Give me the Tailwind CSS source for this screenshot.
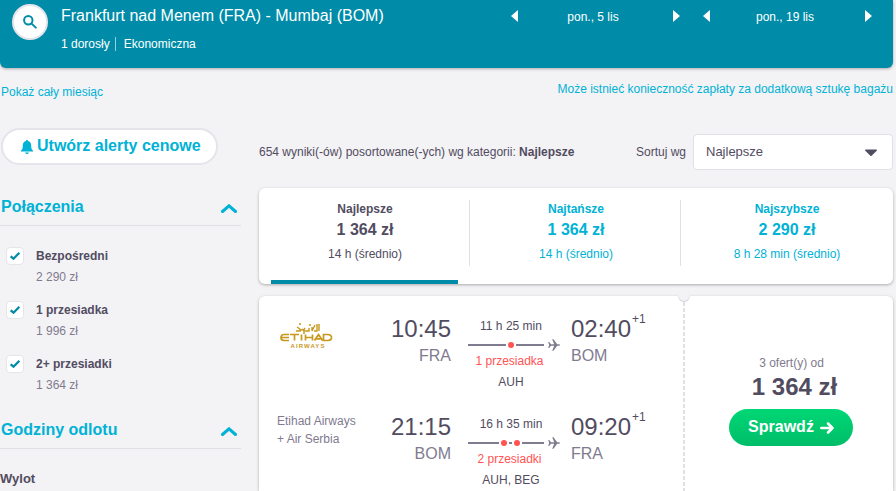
<!DOCTYPE html>
<html lang="pl">
<head>
    <meta charset="UTF-8">
    <meta name="viewport" content="width=device-width, initial-scale=1.0">
    <title>Frankfurt nad Menem (FRA) - Mumbaj (BOM)</title>
    <script src="https://cdn.jsdelivr.net/npm/@tailwindcss/browser@4"></script>
</head>
<body class="h-[491px] overflow-hidden bg-[#f3f2f5] font-['Liberation_Sans',Arial,sans-serif] text-xs text-[#524c61]">
    <!-- Search summary -->
    <header class="flex h-[68px] w-[893px] rounded-b-md bg-[#008ca8] pl-3 text-white shadow-[0_1px_3px_rgba(0,0,0,0.3)]">
        <button class="mt-1 flex size-9 items-center justify-center rounded-full border-2 border-[#e6e4eb] bg-white">
            <svg class="size-[14px]" viewBox="0 0 14 14" fill="none" stroke="#008ca8" stroke-width="2" stroke-linecap="round"><circle cx="5.3" cy="5.3" r="4.2"/><path d="M8.6 8.6 12.8 12.6"/></svg>
        </button>
        <div class="ml-[13px] w-[450px] pt-1">
            <h1 class="text-base">Frankfurt nad Menem (FRA) - Mumbaj (BOM)</h1>
            <div class="mt-2 flex h-4 items-center whitespace-nowrap">
                <span class="border-r border-white/60 pr-[5px] leading-[14px]">1 dorosły</span>
                <span class="pl-2">Ekonomiczna</span>
            </div>
        </div>
        <div class="mt-2 flex h-4 w-[169px] items-center justify-between">
            <svg class="h-3 w-[7px]" viewBox="0 0 7 12" fill="#fff"><path d="M7 0v12L0 6z"/></svg>
            <span class="pt-px pr-[5px]">pon., 5 lis</span>
            <svg class="h-3 w-[7px]" viewBox="0 0 7 12" fill="#fff"><path d="M0 0v12l7-6z"/></svg>
        </div>
        <div class="mt-2 ml-[23px] flex h-4 w-[169px] items-center justify-between">
            <svg class="h-3 w-[7px]" viewBox="0 0 7 12" fill="#fff"><path d="M7 0v12L0 6z"/></svg>
            <span class="pt-px pr-[5px]">pon., 19 lis</span>
            <svg class="h-3 w-[7px]" viewBox="0 0 7 12" fill="#fff"><path d="M0 0v12l7-6z"/></svg>
        </div>
    </header>

    <div class="flex h-[60px] w-[893px] justify-between pt-3 text-[#00b2d6]">
        <a class="mt-1 ml-px">Pokaż cały miesiąc</a>
        <a class="mt-px">Może istnieć konieczność zapłaty za dodatkową sztukę bagażu</a>
    </div>

    <div class="flex">
        <!-- Filters -->
        <aside class="w-[241px]">
            <button class="ml-px flex h-[37px] w-[217px] items-center rounded-full border-2 border-[#e6e4eb] bg-white pl-[18px] text-base font-bold text-[#00b2d6]">
                <svg class="mr-1 h-[14px] w-3" viewBox="0 0 12 14" fill="#00b2d6"><path d="M6 0c.6 0 1 .4 1 1 2 .5 3.200 2 3.200 4.200 0 3 .4 4.300 1.800 5.300v1H0v-1C1.400 9.500 1.800 8.200 1.800 5.200 1.800 3 3 1.500 5 1c0-.6.4-1 1-1zM4 12.500h4c-.3.900-1 1.500-2 1.500s-1.700-.6-2-1.500z"/></svg>
                <span class="-mt-0.5">Utwórz alerty cenowe</span>
            </button>
            <section>
                <div class="mt-7 flex h-[33px] items-start justify-between border-b border-[#e1dfe6] pr-1 text-[#00b2d6]">
                    <h2 class="mt-0.5 ml-px text-base font-bold">Połączenia</h2>
                    <svg class="mt-[11px] h-[9px] w-4" viewBox="0 0 16 9" fill="none" stroke="#00b2d6" stroke-width="3" stroke-linecap="round"><path d="M1.500 7.500 8 1.800l6.500 5.700"/></svg>
                </div>
                <div class="mt-[21px] flex h-[54px] pl-1.5">
                    <span class="flex size-[18px] items-center justify-center rounded border border-[#e6e4eb] bg-white"><svg class="h-2 w-2.5" viewBox="0 0 10 8" fill="none" stroke="#008ca8" stroke-width="2.200"><path d="M.7 4.300 3.500 6.700 9.300.8"/></svg></span>
                    <div class="ml-3 pt-px">
                        <div class="font-bold">Bezpośredni</div>
                        <div class="mt-[5px] text-[#817b8f]">2 290 zł</div>
                    </div>
                </div>
                <div class="flex h-[54px] pl-1.5">
                    <span class="flex size-[18px] items-center justify-center rounded border border-[#e6e4eb] bg-white"><svg class="h-2 w-2.5" viewBox="0 0 10 8" fill="none" stroke="#008ca8" stroke-width="2.200"><path d="M.7 4.300 3.500 6.700 9.300.8"/></svg></span>
                    <div class="ml-3 pt-px">
                        <div class="font-bold">1 przesiadka</div>
                        <div class="mt-[5px] text-[#817b8f]">1 996 zł</div>
                    </div>
                </div>
                <div class="flex h-[54px] pl-1.5">
                    <span class="flex size-[18px] items-center justify-center rounded border border-[#e6e4eb] bg-white"><svg class="h-2 w-2.5" viewBox="0 0 10 8" fill="none" stroke="#008ca8" stroke-width="2.200"><path d="M.7 4.300 3.500 6.700 9.300.8"/></svg></span>
                    <div class="ml-3 pt-px">
                        <div class="font-bold">2+ przesiadki</div>
                        <div class="mt-[5px] text-[#817b8f]">1 364 zł</div>
                    </div>
                </div>
            </section>
            <section>
                <div class="mt-[7px] flex h-[33px] items-start justify-between border-b border-[#e1dfe6] pr-1 text-[#00b2d6]">
                    <h2 class="mt-0.5 ml-px text-base font-bold">Godziny odlotu</h2>
                    <svg class="mt-[11px] h-[9px] w-4" viewBox="0 0 16 9" fill="none" stroke="#00b2d6" stroke-width="3" stroke-linecap="round"><path d="M1.500 7.500 8 1.800l6.500 5.700"/></svg>
                </div>
                <h3 class="mt-5 text-[13px] leading-5 font-bold">Wylot</h3>
            </section>
        </aside>

        <!-- Results -->
        <main class="ml-[18px] w-[634px]">
            <div class="mt-1.5 flex h-9 items-center">
                <p>654 wyniki(-ów) posortowane(-ych) wg kategorii: <b>Najlepsze</b></p>
                <span class="ml-auto">Sortuj wg</span>
                <div class="ml-[7px] flex h-9 w-[200px] items-center justify-between rounded-sm border border-[#e1dfe6] bg-white pr-[15px] pl-3 text-[13px]">
                    Najlepsze
                    <svg class="mt-px h-[7px] w-3" viewBox="0 0 12 7" fill="#524c61"><path d="M0 1.500Q0 .5 1 .5h10q1 0 1 1L6.600 6.700q-.6.500-1.200 0z"/></svg>
                </div>
            </div>

            <div class="mt-[18px] grid h-24 grid-cols-[211px_211px_212px] rounded-md bg-white pt-3 text-center shadow-[0_1px_3px_rgba(0,0,0,0.3)]">
                <div class="flex flex-col">
                    <div class="h-[66px] border-r border-[#e1dfe6] pt-px pl-0.5">
                        <div class="font-bold">Najlepsze</div>
                        <div class="mt-px text-base font-bold">1 364 zł</div>
                        <div class="mt-1">14 h (średnio)</div>
                    </div>
                    <div class="mx-3 mt-auto h-1 bg-[#008ca8]"></div>
                </div>
                <div class="h-[66px] border-r border-[#e1dfe6] pt-px pl-0.5 text-[#00b2d6]">
                    <div class="font-bold">Najtańsze</div>
                    <div class="mt-px text-base font-bold">1 364 zł</div>
                    <div class="mt-1">14 h (średnio)</div>
                </div>
                <div class="h-[66px] pt-px text-[#00b2d6]">
                    <div class="font-bold">Najszybsze</div>
                    <div class="mt-px text-base font-bold">2 290 zł</div>
                    <div class="mt-1">8 h 28 min (średnio)</div>
                </div>
            </div>

            <!-- Ticket -->
            <article class="relative mt-3 flex h-[195px] rounded-t-md bg-white shadow-[0_1px_3px_rgba(0,0,0,0.3)]">
                <div class="w-[424px] pt-[18px]">
                    <div class="flex h-[98px]">
                        <div class="w-[110px] pt-2 pl-5">
                            <svg class="h-7 w-14" viewBox="0 0 56 28" fill="none" stroke="#c8981c">
                                <path d="M17 9h4l3-2M18 5l3 2v2m3 0h6V6m3 3V5m-9 4 2-3m7 3 3-6m-1 6h3V2m2 7V2m-16 9h2m4-8h2m-12-1h2" stroke-width="1.400"/>
                                <path d="M10 12.500H5q-3 0-3 3t3 3h5m-8-3h8m1-3h9m-4.500 0v6m7-6v6m4-6v6m0-3h7m0-3v6m2 0 4-6 4 6m-7-1.700h5m3-4.300h4q4 0 4 3t-4 3h-4z" stroke-width="1.700"/>
                                <text x="11.500" y="25.500" fill="#c8981c" stroke="none" font-size="6" font-weight="700" textLength="34">AIRWAYS</text>
                            </svg>
                        </div>
                        <div class="w-[82px] text-right">
                            <div class="text-2xl leading-[30px]">10:45</div>
                            <div class="text-base text-[#817b8f]">FRA</div>
                        </div>
                        <div class="ml-[17px] w-[92px]">
                            <div class="mt-1 w-[86px] text-center">11 h 25 min</div>
                            <svg class="mt-[5px] h-3 w-[92px]" viewBox="0 0 92 12"><path d="M0 6h38m10 0h28" stroke="#817b8f" stroke-width="2"/><circle cx="43" cy="6" r="3" fill="#ff5452"/><path d="M80.200 3h1l1.800 2.200h3.200L84.200.2h1.300l3.700 5h1.800q1 .3 1 .8t-1 .8h-1.800l-3.700 5h-1.300l2-5H83L81.200 9h-1l1-3z" fill="#817b8f"/></svg>
                            <div class="mt-0.5 w-[83px] text-center whitespace-nowrap text-[#ff5452]">1 przesiadka</div>
                            <div class="mt-[5px] w-[86px] text-center">AUH</div>
                        </div>
                        <div class="ml-[11px]">
                            <div class="flex items-start text-2xl leading-[30px]">02:40<sup class="top-0 -mt-[3px] ml-px text-xs">+1</sup></div>
                            <div class="text-base text-[#817b8f]">BOM</div>
                        </div>
                    </div>
                    <div class="flex h-[79px]">
                        <div class="w-[110px] pl-[18px] leading-[18px] text-[#817b8f]">Etihad Airways<br>+ Air Serbia</div>
                        <div class="w-[82px] text-right">
                            <div class="text-2xl leading-[30px]">21:15</div>
                            <div class="text-base text-[#817b8f]">BOM</div>
                        </div>
                        <div class="ml-[17px] w-[92px]">
                            <div class="mt-1 w-[86px] text-center">16 h 35 min</div>
                            <svg class="mt-[5px] h-3 w-[92px]" viewBox="0 0 92 12"><path d="M0 6h31m10 0h3m10 0h22" stroke="#817b8f" stroke-width="2"/><circle cx="36" cy="6" r="3" fill="#ff5452"/><circle cx="49" cy="6" r="3" fill="#ff5452"/><path d="M80.200 3h1l1.800 2.200h3.200L84.200.2h1.300l3.700 5h1.800q1 .3 1 .8t-1 .8h-1.800l-3.700 5h-1.300l2-5H83L81.200 9h-1l1-3z" fill="#817b8f"/></svg>
                            <div class="mt-0.5 w-[83px] text-center whitespace-nowrap text-[#ff5452]">2 przesiadki</div>
                            <div class="mt-[5px] w-[86px] text-center leading-4">AUH, BEG</div>
                        </div>
                        <div class="ml-[11px]">
                            <div class="flex items-start text-2xl leading-[30px]">09:20<sup class="top-0 -mt-[3px] ml-px text-xs">+1</sup></div>
                            <div class="text-base text-[#817b8f]">FRA</div>
                        </div>
                    </div>
                </div>
                <div class="w-0.5 bg-[repeating-linear-gradient(to_bottom,#e1dfe6_0,#e1dfe6_4px,transparent_4px,transparent_6px)]"></div>
                <div class="absolute -top-1.5 left-[419px] h-3 w-3 rounded-full bg-[#f3f2f5] shadow-[inset_0_-1px_1px_rgba(0,0,0,0.12)]"></div>
                <div class="flex flex-1 flex-col items-center pt-[59px] pl-[5px]">
                    <div class="text-[#817b8f]">3 ofert(y) od</div>
                    <div class="pl-1.5 text-2xl font-bold">1 364 zł</div>
                    <button class="mt-1.5 mr-px flex h-[37px] w-[124px] items-center justify-center rounded-full bg-linear-to-b from-[#00d775] to-[#00bd68] text-base font-bold text-white">
                        <span class="-mt-0.5">Sprawdź</span>
                        <svg class="ml-1.5 h-3 w-[14px]" viewBox="0 0 14 12" fill="none" stroke="#fff" stroke-width="2.500" stroke-linecap="round" stroke-linejoin="round"><path d="M1.300 6h11M8 1.500 12.500 6 8 10.500"/></svg>
                    </button>
                </div>
            </article>
        </main>
    </div>
</body>
</html>
